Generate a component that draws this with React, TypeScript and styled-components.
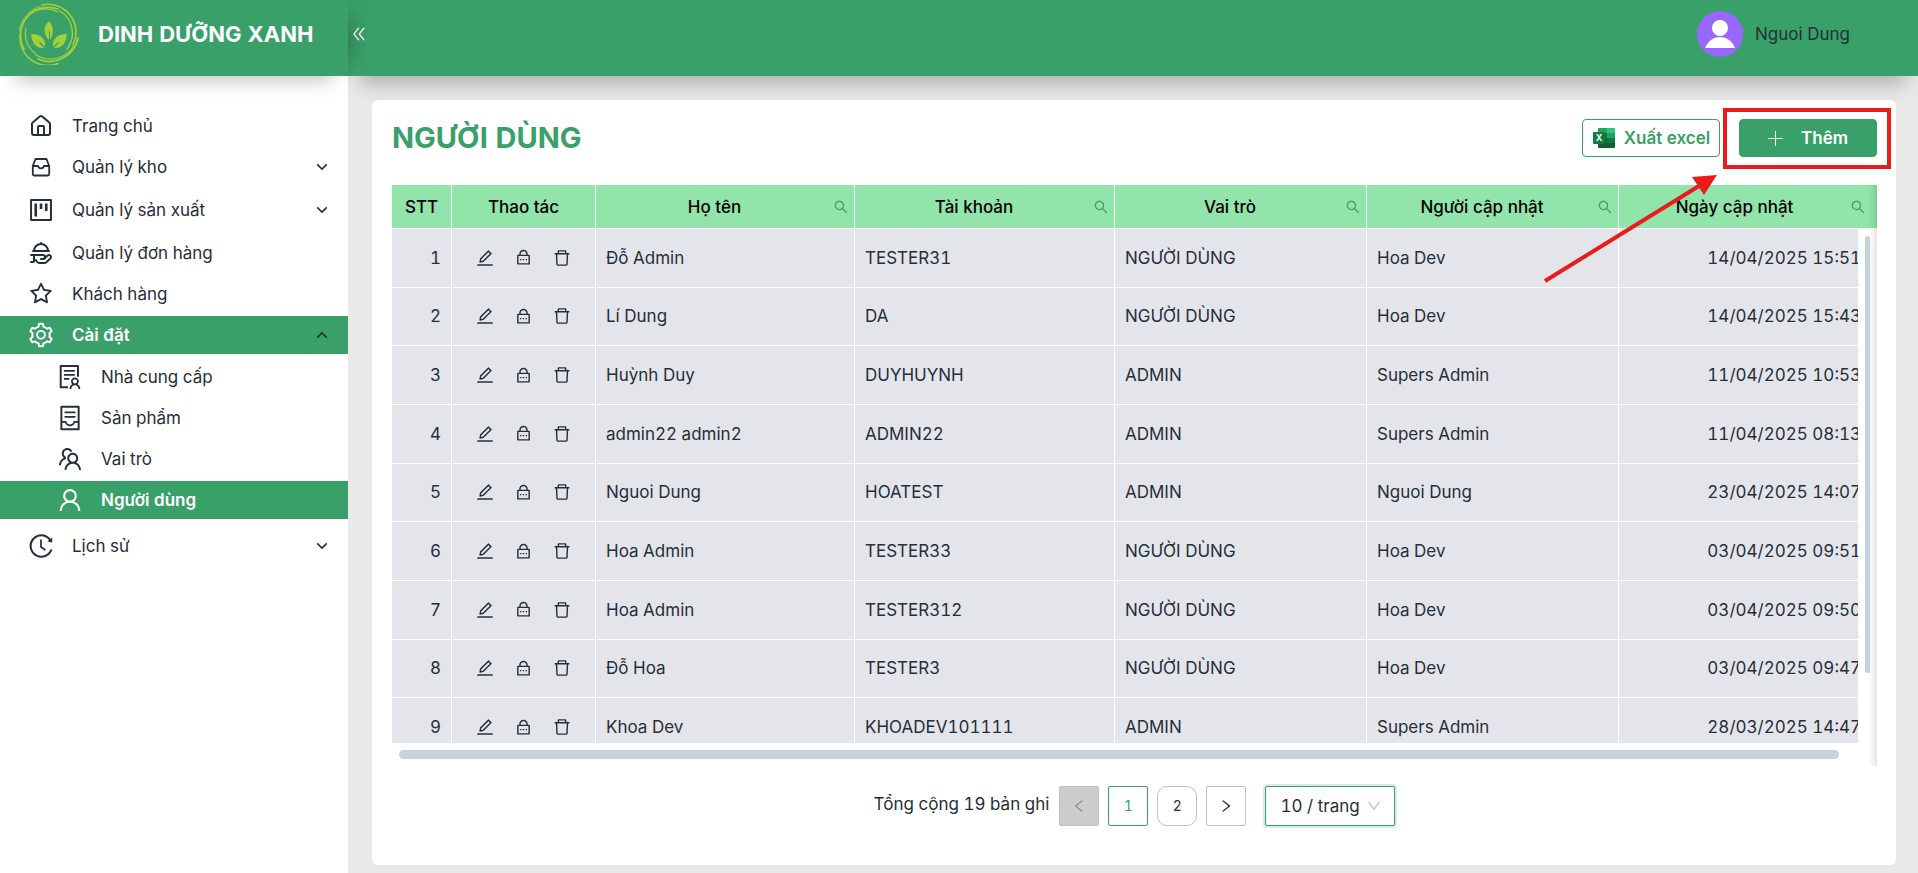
import React from "react";
import styled, { createGlobalStyle, css } from "styled-components";
import {
  AiOutlineContainer,
  AiOutlineDelete,
  AiOutlineDoubleLeft,
  AiOutlineDown,
  AiOutlineEdit,
  AiOutlineHistory,
  AiOutlineLeft,
  AiOutlineProject,
  AiOutlineRight,
  AiOutlineSearch,
  AiOutlineSetting,
  AiOutlineSolution,
  AiOutlineStar,
  AiOutlineTeam,
  AiOutlineUser,
} from "react-icons/ai";
import { RiArrowDownSLine, RiArrowUpSLine, RiLockPasswordLine } from "react-icons/ri";
import { HandPlatter, House } from "lucide-react";

const green = "#3aa06a";
const ink = "#252f38";

const GlobalStyle = createGlobalStyle`
  *, *::before, *::after { box-sizing: border-box; }
  body {
    margin: 0;
    background: #e9e9e9;
    color: ${ink};
    font-family: Inter, "Liberation Sans", sans-serif;
    font-size: 17px;
    line-height: 24px;
    font-variant-numeric: tabular-nums;
  }
  button, select { font: inherit; color: inherit; }
`;

const Page = styled.div`
  display: grid;
  grid-template-columns: 348px minmax(0, 1fr);
  grid-template-rows: 76px minmax(0, 1fr);
  min-height: 100vh;
`;

const Brand = styled.div`
  position: relative;
  z-index: 3;
  display: flex;
  align-items: center;
  gap: 19px;
  padding: 0 0 8px 18px;
  background: ${green};
  color: #fff;
  box-shadow: 0 20px 20px -16px rgba(0, 0, 0, 0.25), 20px 0 20px -16px rgba(0, 0, 0, 0.25);
  clip-path: inset(0 -20px -32px 0);
`;

const BrandName = styled.span`
  font-size: 22px;
  font-weight: 700;
  line-height: 28px;
  white-space: nowrap;
`;

const TopBar = styled.header`
  position: relative;
  z-index: 2;
  display: flex;
  align-items: center;
  justify-content: space-between;
  padding: 0 68px 8px 2px;
  background: ${green};
  box-shadow: 0 20px 20px -12px rgba(0, 0, 0, 0.25);
`;

const CollapseButton = styled.button`
  display: flex;
  padding: 0;
  border: 0;
  background: none;
  color: #fff;
  cursor: pointer;
`;

const UserMenu = styled.button`
  display: flex;
  align-items: center;
  gap: 12px;
  padding: 0;
  border: 0;
  background: none;
  cursor: pointer;
`;

const Sidebar = styled.nav`
  background: #fff;
  padding-top: 31px;
`;

const MenuList = styled.ul`
  margin: 0;
  padding: 0;
  list-style: none;
`;

const SubMenuList = styled(MenuList)`
  margin: 4px 0 8px;
`;

const MenuLink = styled.a<{ $active?: boolean; $nested?: boolean; $tall?: boolean }>`
  display: flex;
  align-items: center;
  gap: 17px;
  height: 38px;
  margin: ${(p) => (p.$tall ? "5px 0" : "0 0 3px")};
  padding: 0 16px 0 ${(p) => (p.$nested ? 56 : 27)}px;
  color: ${ink};
  text-decoration: none;
  ${(p) =>
    p.$active &&
    css`
      background: ${green};
      color: #fff;
      font-weight: 600;
    `}
`;

const MenuIcon = styled.span`
  display: flex;
  justify-content: center;
  width: 28px;
`;

const MenuText = styled.span`
  flex: 1;
`;

const MenuArrow = styled.span`
  display: flex;
  color: ${ink};
`;

const Main = styled.main`
  display: flex;
  padding: 24px 22px 8px 24px;
`;

const Card = styled.section`
  flex: 1;
  min-width: 0;
  padding: 18px 19px 20px 20px;
  border-radius: 6px;
  background: #fff;
`;

const CardHead = styled.div`
  display: flex;
  align-items: flex-start;
  justify-content: space-between;
  height: 67px;
`;

const Title = styled.h1`
  margin: 0;
  color: ${green};
  font-size: 29px;
  font-weight: 700;
  line-height: 40px;
`;

const Actions = styled.div`
  display: flex;
  gap: 19px;
`;

const ActionButton = styled.button<{ $primary?: boolean }>`
  display: flex;
  align-items: center;
  justify-content: center;
  gap: ${(p) => (p.$primary ? 18 : 8)}px;
  width: 138px;
  height: 38px;
  margin-top: 1px;
  padding: 0;
  border: 1px solid ${green};
  border-radius: 4px;
  background: ${(p) => (p.$primary ? green : "#fff")};
  color: ${(p) => (p.$primary ? "#fff" : green)};
  font-weight: 600;
  white-space: nowrap;
  cursor: pointer;
`;

const Highlighted = styled.div`
  position: relative;
  display: flex;
`;

const HighlightFrame = styled.div`
  position: absolute;
  inset: -10px -14px -12px -16px;
  border: 4px solid #e81c1c;
  pointer-events: none;
`;

const HighlightArrow = styled.svg`
  position: absolute;
  top: 56px;
  right: 160px;
  z-index: 1;
  pointer-events: none;
`;

const TableFrame = styled.div`
  position: relative;
  &::after {
    content: "";
    position: absolute;
    top: 0;
    right: 0;
    bottom: 0;
    width: 14px;
    box-shadow: inset -10px 0 8px -8px rgba(5, 5, 5, 0.16);
    pointer-events: none;
  }
`;

const TableBox = styled.div`
  max-height: 558px;
  overflow: hidden;
`;

const DataTable = styled.table`
  width: 100%;
  height: 572px;
  border-collapse: separate;
  border-spacing: 0;
  table-layout: fixed;
`;

const Col = styled.col<{ $w: number }>`
  width: ${(p) => p.$w}px;
`;

const HeadRow = styled.tr`
  height: 44px;
`;

const Th = styled.th`
  padding: 0;
  border-right: 1px solid #fff;
  border-bottom: 1px solid #fff;
  background: #91e4aa;
  color: #000;
  font-weight: 500;
  &:last-child {
    padding-right: 6px;
    border-right: 0;
  }
`;

const ThInner = styled.div<{ $search?: boolean }>`
  display: flex;
  align-items: center;
  padding-right: ${(p) => (p.$search ? 5 : 0)}px;
`;

const ThText = styled.span`
  flex: 1;
  text-align: center;
`;

const IconButton = styled.button`
  display: flex;
  align-items: center;
  padding: 0;
  border: 0;
  background: none;
  cursor: pointer;
`;

const SearchButton = styled(IconButton)`
  color: ${green};
`;

const Td = styled.td<{ $right?: boolean }>`
  padding: 0 10px;
  border-right: 1px solid #fff;
  border-bottom: 1px solid #fff;
  background: #e4e5eb;
  text-align: ${(p) => (p.$right ? "right" : "left")};
  white-space: nowrap;
  &:last-child {
    padding-right: 16px;
    border-right: 0;
  }
`;

const RowActions = styled.div`
  display: flex;
  justify-content: center;
  gap: 20px;
`;

const VerticalTrack = styled.div`
  position: absolute;
  top: 44px;
  right: 0;
  bottom: 0;
  width: 19px;
  padding: 7px;
  background: #fff;
`;

const VerticalThumb = styled.div`
  width: 5px;
  height: 437px;
  border-radius: 3px;
  background: #c5d2e0;
`;

const HorizontalTrack = styled.div`
  padding: 7px 38px 7px 7px;
`;

const HorizontalThumb = styled.div`
  height: 9px;
  border-radius: 5px;
  background: #c5d2e0;
`;

const Pager = styled.div`
  display: flex;
  align-items: center;
  justify-content: center;
  margin-top: 20px;
`;

const Total = styled.span`
  margin-right: 10px;
  padding-bottom: 4px;
`;

const PageButton = styled.button<{ $current?: boolean; $round?: boolean }>`
  display: flex;
  align-items: center;
  justify-content: center;
  width: 40px;
  height: 40px;
  margin-right: 9px;
  padding: 0;
  border: 1px solid ${(p) => (p.$current ? green : "#c0c0c6")};
  border-radius: ${(p) => (p.$round ? 10 : 2)}px;
  background: #fff;
  color: ${(p) => (p.$current ? green : ink)};
  font-size: 14px;
  cursor: pointer;
  &:disabled {
    background: #cccccc;
    color: #8f8f8f;
  }
`;

const SizeBox = styled.label`
  position: relative;
  display: flex;
  margin-left: 10px;
  svg {
    position: absolute;
    top: 12px;
    right: 13px;
    color: #bfbfbf;
    pointer-events: none;
  }
`;

const SizeSelect = styled.select`
  width: 130px;
  height: 40px;
  padding: 0 14px;
  border: 1px solid ${green};
  border-radius: 2px;
  outline: 0;
  background: #fff;
  box-shadow: 0 0 0 2px rgba(58, 160, 106, 0.2);
  appearance: none;
`;

const Logo = () => (
  <svg width="61" height="62" viewBox="0 0 61 62" fill="none" aria-hidden="true">
    <g stroke="#a3cf3a" strokeLinecap="round">
      <path d="M6 46A28 28 0 0 1 40 6" strokeWidth="1.8" />
      <path d="M1.500 27A29 29 0 0 1 22 3.500" strokeWidth="1" />
      <path d="M24 2A28 28 0 0 1 55 42" strokeWidth="1.6" />
      <path d="M12 11A26 26 0 0 1 40 9" strokeWidth="1.2" />
      <path d="M42 8A26 26 0 0 1 49 46" strokeWidth="1.4" />
      <path d="M60 35A29 29 0 0 1 20 56" strokeWidth="1.8" />
      <path d="M56 43A28 28 0 0 1 18 52" strokeWidth="1.2" />
      <path d="M2 32A28 28 0 0 0 40 60.500" strokeWidth="1.500" />
      <path d="M8 25A25 25 0 0 0 18 51" strokeWidth="1.200" />
    </g>
    <g fill="#a3cf3a">
      <path d="M31 18c5 6 5 13 1 19v-9h-1v9c-6-6-6-13 0-19z" />
      <path d="M13 31c9 0 15 4 14 13l-5-5-1 1 5 5c-8 1-12-5-13-14z" />
      <path d="M49 31c-9 0-15 4-14 13l5-5 1 1-5 5c8 1 12-5 13-14z" />
    </g>
  </svg>
);

const ExcelIcon = () => (
  <svg width="24" height="24" viewBox="0 0 24 24" aria-hidden="true">
    <path d="M6 3a1 1 0 0 1 1-1h8v6H6z" fill="#21a366" />
    <path d="M15 2h7a1 1 0 0 1 1 1v5h-8z" fill="#33c481" />
    <path d="M6 7h9v5H6z" fill="#107c41" />
    <path d="M15 7h8v5h-8z" fill="#21a366" />
    <path d="M6 12h9v5H6z" fill="#185c37" />
    <path d="M15 12h8v5h-8z" fill="#107c41" />
    <path d="M6 17h17v4a1 1 0 0 1-1 1H7a1 1 0 0 1-1-1z" fill="#185c37" />
    <rect x="1" y="6" width="12" height="12" rx="1" fill="#107c41" />
    <text x="7" y="15" fill="#fff" fontSize="9" fontWeight="700" textAnchor="middle">
      X
    </text>
  </svg>
);

const PlusIcon = () => (
  <svg width="15" height="15" viewBox="0 0 15 15" stroke="currentColor" aria-hidden="true">
    <path d="M7.500 0v15M0 7.500h15" />
  </svg>
);

const StockIcon = () => (
  <svg
    width="24"
    height="24"
    viewBox="0 0 24 24"
    fill="none"
    stroke="currentColor"
    strokeWidth="1.800"
    strokeLinejoin="round"
    aria-hidden="true"
  >
    <path d="M6.500 4h11l2.700 7v8a1.500 1.500 0 0 1-1.500 1.500H5.300A1.500 1.500 0 0 1 3.800 19v-8z" />
    <path d="M4 11h5c.4 1.700 1.500 2.300 3 2.300s2.600-.6 3-2.300h5" />
  </svg>
);

const Avatar = () => (
  <svg width="46" height="46" viewBox="0 0 46 46" aria-hidden="true">
    <circle cx="23" cy="23" r="23" fill="#9966ff" />
    <circle cx="23" cy="17" r="8" fill="#fff" />
    <path d="M8 37c3-7 8-11 15-11s12 4 15 11z" fill="#fff" />
  </svg>
);

type MenuEntry = {
  label: string;
  icon: React.ReactNode;
  arrow?: "up" | "down";
  active?: boolean;
  tall?: boolean;
  children?: MenuEntry[];
};

const menu: MenuEntry[] = [
  { label: "Trang chủ", icon: <House size={24} /> },
  { label: "Quản lý kho", icon: <StockIcon />, arrow: "down" },
  { label: "Quản lý sản xuất", icon: <AiOutlineProject size={28} />, arrow: "down", tall: true },
  { label: "Quản lý đơn hàng", icon: <HandPlatter size={24} /> },
  { label: "Khách hàng", icon: <AiOutlineStar size={26} /> },
  {
    label: "Cài đặt",
    icon: <AiOutlineSetting size={28} />,
    arrow: "up",
    active: true,
    children: [
      { label: "Nhà cung cấp", icon: <AiOutlineSolution size={28} /> },
      { label: "Sản phẩm", icon: <AiOutlineContainer size={28} /> },
      { label: "Vai trò", icon: <AiOutlineTeam size={28} /> },
      { label: "Người dùng", icon: <AiOutlineUser size={28} />, active: true },
    ],
  },
  { label: "Lịch sử", icon: <AiOutlineHistory size={28} />, arrow: "down", tall: true },
];

const MenuItem = ({ item, nested }: { item: MenuEntry; nested?: boolean }) => (
  <li>
    <MenuLink href="#" $active={item.active} $nested={nested} $tall={item.tall}>
      <MenuIcon>{item.icon}</MenuIcon>
      <MenuText>{item.label}</MenuText>
      {item.arrow && (
        <MenuArrow>
          {item.arrow === "up" ? <RiArrowUpSLine size={20} /> : <RiArrowDownSLine size={20} />}
        </MenuArrow>
      )}
    </MenuLink>
    {item.children && (
      <SubMenuList>
        {item.children.map((c) => (
          <MenuItem key={c.label} item={c} nested />
        ))}
      </SubMenuList>
    )}
  </li>
);

const columns = [
  { label: "STT", width: 60 },
  { label: "Thao tác", width: 144 },
  { label: "Họ tên", width: 259, search: true },
  { label: "Tài khoản", width: 260, search: true },
  { label: "Vai trò", width: 252, search: true },
  { label: "Người cập nhật", width: 252, search: true },
  { label: "Ngày cập nhật", width: 258, search: true },
];

const users = [
  ["Đỗ Admin", "TESTER31", "NGƯỜI DÙNG", "Hoa Dev", "14/04/2025 15:51"],
  ["Lí Dung", "DA", "NGƯỜI DÙNG", "Hoa Dev", "14/04/2025 15:43"],
  ["Huỳnh Duy", "DUYHUYNH", "ADMIN", "Supers Admin", "11/04/2025 10:53"],
  ["admin22 admin2", "ADMIN22", "ADMIN", "Supers Admin", "11/04/2025 08:13"],
  ["Nguoi Dung", "HOATEST", "ADMIN", "Nguoi Dung", "23/04/2025 14:07"],
  ["Hoa Admin", "TESTER33", "NGƯỜI DÙNG", "Hoa Dev", "03/04/2025 09:51"],
  ["Hoa Admin", "TESTER312", "NGƯỜI DÙNG", "Hoa Dev", "03/04/2025 09:50"],
  ["Đỗ Hoa", "TESTER3", "NGƯỜI DÙNG", "Hoa Dev", "03/04/2025 09:47"],
  ["Khoa Dev", "KHOADEV101111", "ADMIN", "Supers Admin", "28/03/2025 14:47"],
];

export default function App() {
  return (
    <>
      <GlobalStyle />
      <Page>
        <Brand>
          <Logo />
          <BrandName>DINH DƯỠNG XANH</BrandName>
        </Brand>
        <TopBar>
          <CollapseButton type="button" aria-label="Thu gọn">
            <AiOutlineDoubleLeft size={18} />
          </CollapseButton>
          <UserMenu type="button">
            <Avatar />
            Nguoi Dung
          </UserMenu>
        </TopBar>
        <Sidebar>
          <MenuList>
            {menu.map((m) => (
              <MenuItem key={m.label} item={m} />
            ))}
          </MenuList>
        </Sidebar>
        <Main>
          <Card>
            <CardHead>
              <Title>NGƯỜI DÙNG</Title>
              <Actions>
                <ActionButton type="button">
                  <ExcelIcon />
                  Xuất excel
                </ActionButton>
                <Highlighted>
                  <ActionButton type="button" $primary>
                    <PlusIcon />
                    Thêm
                  </ActionButton>
                  <HighlightFrame />
                  <HighlightArrow width="176" height="110" viewBox="0 0 176 110" aria-hidden="true">
                    <path d="M4 107L158 12" stroke="#e81c1c" strokeWidth="4" />
                    <path d="M176 1L151 3L163 21z" fill="#e81c1c" />
                  </HighlightArrow>
                </Highlighted>
              </Actions>
            </CardHead>
            <TableFrame>
              <TableBox>
                <DataTable>
                  <colgroup>
                    {columns.map((c) => (
                      <Col key={c.label} $w={c.width} />
                    ))}
                  </colgroup>
                  <thead>
                    <HeadRow>
                      {columns.map((c) => (
                        <Th key={c.label} scope="col">
                          <ThInner $search={c.search}>
                            <ThText>{c.label}</ThText>
                            {c.search && (
                              <SearchButton type="button" aria-label={`Tìm ${c.label}`}>
                                <AiOutlineSearch size={16} />
                              </SearchButton>
                            )}
                          </ThInner>
                        </Th>
                      ))}
                    </HeadRow>
                  </thead>
                  <tbody>
                    {users.map(([name, account, role, editor, date], i) => (
                      <tr key={account}>
                        <Td $right>{i + 1}</Td>
                        <Td>
                          <RowActions>
                            <IconButton type="button" aria-label="Sửa">
                              <AiOutlineEdit size={20} />
                            </IconButton>
                            <IconButton type="button" aria-label="Đổi mật khẩu">
                              <RiLockPasswordLine size={17} />
                            </IconButton>
                            <IconButton type="button" aria-label="Xóa">
                              <AiOutlineDelete size={20} />
                            </IconButton>
                          </RowActions>
                        </Td>
                        <Td>{name}</Td>
                        <Td>{account}</Td>
                        <Td>{role}</Td>
                        <Td>{editor}</Td>
                        <Td $right>{date}</Td>
                      </tr>
                    ))}
                  </tbody>
                </DataTable>
              </TableBox>
              <VerticalTrack>
                <VerticalThumb />
              </VerticalTrack>
              <HorizontalTrack>
                <HorizontalThumb />
              </HorizontalTrack>
            </TableFrame>
            <Pager>
              <Total>Tổng cộng 19 bản ghi</Total>
              <PageButton type="button" disabled aria-label="Trang trước">
                <AiOutlineLeft size={16} />
              </PageButton>
              <PageButton type="button" $current>
                1
              </PageButton>
              <PageButton type="button" $round>
                2
              </PageButton>
              <PageButton type="button" aria-label="Trang sau">
                <AiOutlineRight size={16} />
              </PageButton>
              <SizeBox>
                <SizeSelect aria-label="Số dòng mỗi trang">
                  <option>10 / trang</option>
                </SizeSelect>
                <AiOutlineDown size={16} />
              </SizeBox>
            </Pager>
          </Card>
        </Main>
      </Page>
    </>
  );
}
